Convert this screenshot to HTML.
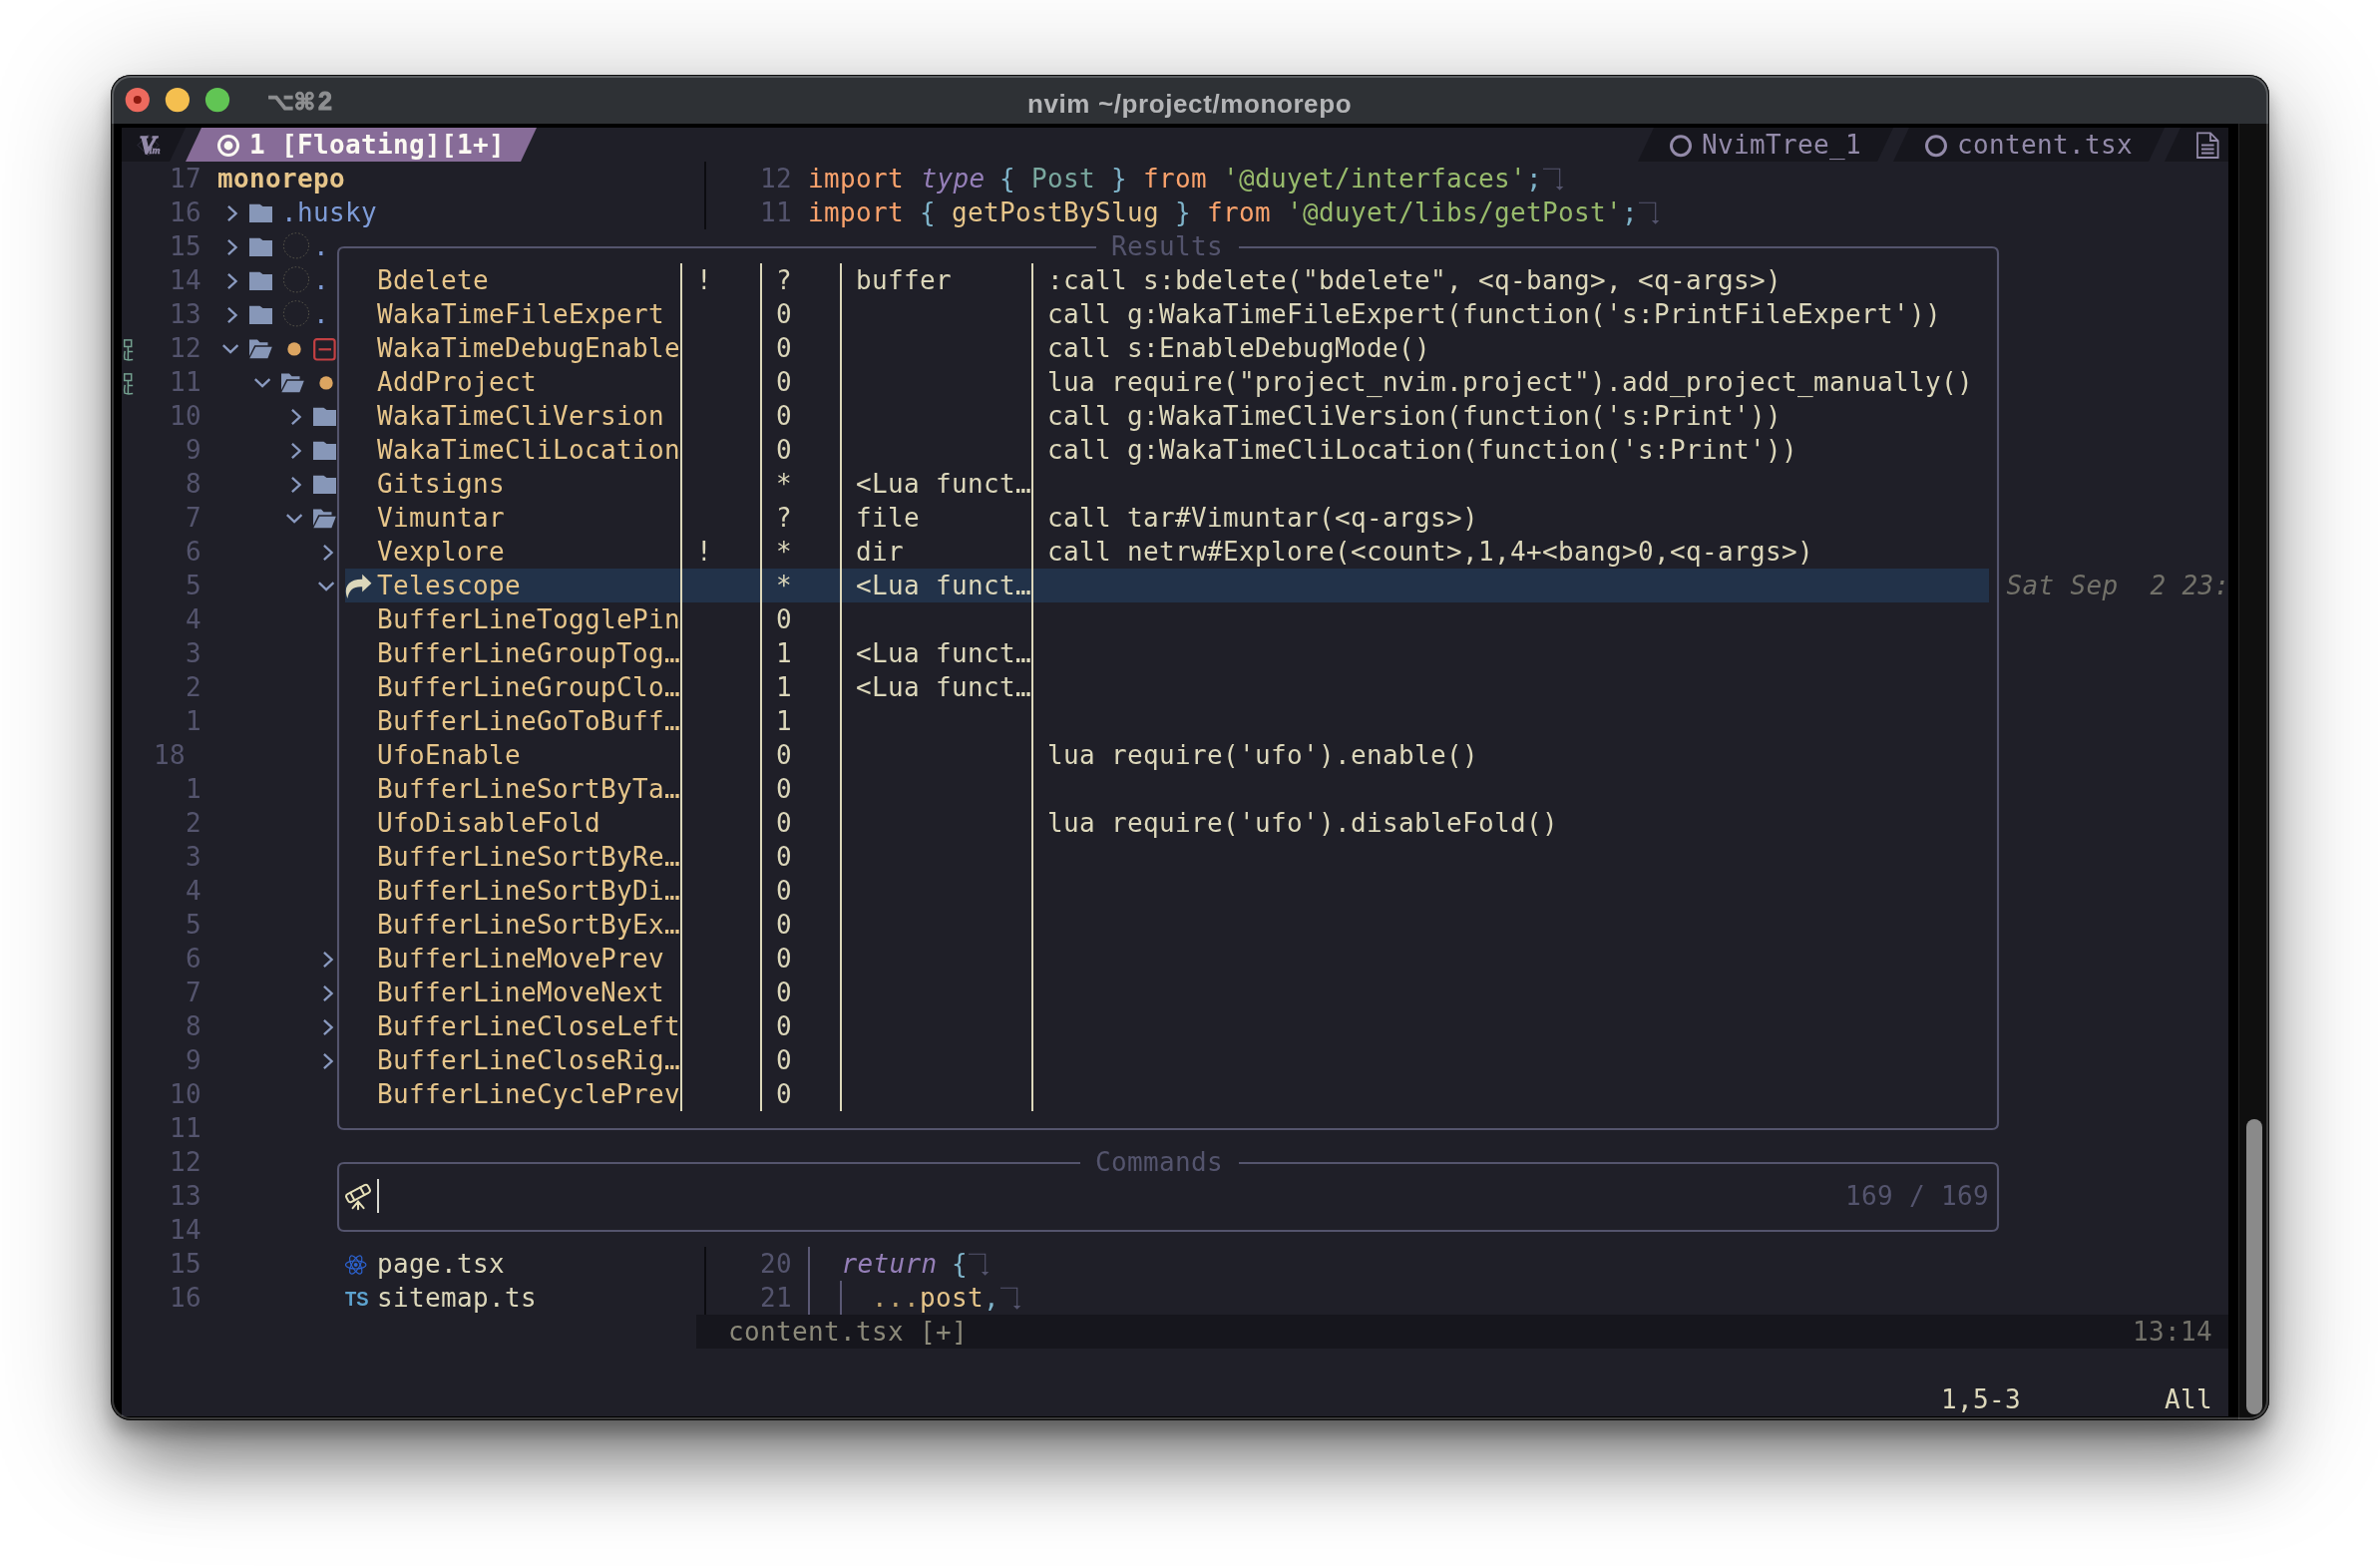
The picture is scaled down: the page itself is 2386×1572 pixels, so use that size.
<!DOCTYPE html>
<html lang="en"><head><meta charset="utf-8"><title>nvim ~/project/monorepo</title>
<style>
html,body{margin:0;padding:0;background:#fff;}
body{width:2386px;height:1572px;position:relative;overflow:hidden;}
.win{position:absolute;left:111px;top:75px;width:2163.5px;height:1348.5px;border-radius:20px;background:#000;overflow:hidden;will-change:transform;}
.shadow{position:absolute;left:111px;top:75px;width:2163.5px;height:1348.5px;border-radius:20px;
 box-shadow:0 12px 18px rgba(0,0,0,.28),0 20px 120px rgba(0,0,0,.28),0 50px 70px -12px rgba(0,0,0,.42);}
.r{position:absolute;display:block;}
.t{position:absolute;height:34px;line-height:34px;white-space:pre;font-family:"DejaVu Sans Mono","Liberation Mono",monospace;font-size:26px;letter-spacing:0.3467px;}
.b{font-weight:bold;}
.i{font-style:italic;margin-left:1.5px;}
.ui{position:absolute;white-space:pre;font-family:"Liberation Sans","DejaVu Sans",sans-serif;font-weight:bold;}
</style></head><body>
<div class="shadow"></div>
<div class="win">
<div class="r" style="left:0px;top:0px;width:2164px;height:49px;background:#2e3135;"></div>
<svg class="r" style="left:13px;top:11px" width="110" height="28" viewBox="0 0 110 28"><circle cx="13.8" cy="14.1" r="12.1" fill="#ed6a5e"/><circle cx="13.8" cy="14.1" r="4" fill="#8c1a10"/><circle cx="53.9" cy="14.1" r="12.1" fill="#f5bf4f"/><circle cx="94" cy="14.1" r="12.1" fill="#61c554"/></svg>
<span class="ui" style="left:157px;top:11px;line-height:30px;color:#8e8f91;"><span style="font-family:'DejaVu Sans',sans-serif;font-size:23.5px;-webkit-text-stroke:0.9px #8e8f91;letter-spacing:-0.5px">⌥⌘</span><span style="font-size:25px;margin-left:3px;-webkit-text-stroke:1px #8e8f91">2</span></span>
<span class="ui" id="title" style="left:919px;top:13.5px;font-size:26px;letter-spacing:0.6px;line-height:30px;color:#b4b5b7;">nvim ~/project/monorepo</span>
<div class="r" style="left:11px;top:53px;width:2112px;height:1292px;background:#1f1f28;"></div>
<div class="r" style="left:2133px;top:49px;width:31px;height:1300px;background:#0f0f0f;"></div>
<div class="r" style="left:2133px;top:49px;width:1px;height:1300px;background:#252525;"></div>
<div class="r" style="left:2141px;top:1047px;width:16px;height:296px;background:#8a8a8a;border-radius:8px;"></div>
<svg class="r" style="left:11px;top:53px" width="80" height="34" viewBox="0 0 80 34"><path d="M0,0 H64 L48,34 H0 Z" fill="#16161d"/></svg>
<svg class="r" style="left:25px;top:59px" width="26" height="24" viewBox="0 0 26 24"><path d="M12.5,1 L23,11.5 L12.5,22 L2,11.5 Z" fill="none" stroke="#3b384a" stroke-width="0.8"/></svg>
<span class="ui" style="left:28.5px;top:55.69999999999999px;font-size:25.5px;line-height:30px;color:#938aa9;font-style:italic;font-family:'Liberation Serif',serif;-webkit-text-stroke:1.3px #938aa9;">V</span>
<span class="ui" style="left:38.5px;top:69.5px;font-size:10.5px;line-height:12px;color:#938aa9;font-style:italic;font-family:'Liberation Serif',serif;-webkit-text-stroke:0.4px #938aa9;">im</span>
<svg class="r" style="left:75px;top:53px" width="352" height="34" viewBox="0 0 352 34"><path d="M16,0 H352 L336,34 H0 Z" fill="#876c98"/></svg>
<svg class="r" style="left:106px;top:59px" width="24" height="24" viewBox="0 0 24 24"><circle cx="12" cy="12" r="9.5" fill="none" stroke="#fbf9f2" stroke-width="3"/><circle cx="12" cy="12" r="4.4" fill="#fbf9f2"/></svg>
<span class="t b" style="left:139px;top:53px;color:#fbf9f2;">1 [Floating][1+]</span>
<svg class="r" style="left:1531px;top:53px" width="256" height="34" viewBox="0 0 256 34"><path d="M16,0 H256 L240,34 H0 Z" fill="#16161d"/></svg>
<svg class="r" style="left:1562px;top:59px" width="24" height="24" viewBox="0 0 24 24"><circle cx="12" cy="12.2" r="9.5" fill="none" stroke="#938aa9" stroke-width="3"/></svg>
<span class="t" style="left:1595px;top:53px;color:#938aa9;">NvimTree_1</span>
<svg class="r" style="left:1787px;top:53px" width="272" height="34" viewBox="0 0 272 34"><path d="M16,0 H272 L256,34 H0 Z" fill="#16161d"/></svg>
<svg class="r" style="left:1818px;top:59px" width="24" height="24" viewBox="0 0 24 24"><circle cx="12" cy="12.2" r="9.5" fill="none" stroke="#938aa9" stroke-width="3"/></svg>
<span class="t" style="left:1851px;top:53px;color:#938aa9;">content.tsx</span>
<svg class="r" style="left:2059px;top:53px" width="64" height="34" viewBox="0 0 64 34"><path d="M16,0 H64 V34 H0 Z" fill="#16161d"/></svg>
<svg class="r" style="left:2089px;top:55px" width="28" height="32" viewBox="0 0 28 32"><g fill="none" stroke="#938aa9" stroke-width="1.8"><path d="M3,3.4 H16 L23.6,11 V28 H3 Z"/><path d="M16,3.4 V11 H23.6"/><path d="M7,15.5 H19.6 M7,19.5 H19.6 M7,23.5 H19.6"/></g></svg>
<span class="t" style="left:59px;top:87px;color:#54546d;">17</span>
<span class="t" style="left:59px;top:121px;color:#54546d;">16</span>
<span class="t" style="left:59px;top:155px;color:#54546d;">15</span>
<span class="t" style="left:59px;top:189px;color:#54546d;">14</span>
<span class="t" style="left:59px;top:223px;color:#54546d;">13</span>
<span class="t" style="left:59px;top:257px;color:#54546d;">12</span>
<span class="t" style="left:59px;top:291px;color:#54546d;">11</span>
<span class="t" style="left:59px;top:325px;color:#54546d;">10</span>
<span class="t" style="left:75px;top:359px;color:#54546d;">9</span>
<span class="t" style="left:75px;top:393px;color:#54546d;">8</span>
<span class="t" style="left:75px;top:427px;color:#54546d;">7</span>
<span class="t" style="left:75px;top:461px;color:#54546d;">6</span>
<span class="t" style="left:75px;top:495px;color:#54546d;">5</span>
<span class="t" style="left:75px;top:529px;color:#54546d;">4</span>
<span class="t" style="left:75px;top:563px;color:#54546d;">3</span>
<span class="t" style="left:75px;top:597px;color:#54546d;">2</span>
<span class="t" style="left:75px;top:631px;color:#54546d;">1</span>
<span class="t" style="left:43px;top:665px;color:#54546d;">18</span>
<span class="t" style="left:75px;top:699px;color:#54546d;">1</span>
<span class="t" style="left:75px;top:733px;color:#54546d;">2</span>
<span class="t" style="left:75px;top:767px;color:#54546d;">3</span>
<span class="t" style="left:75px;top:801px;color:#54546d;">4</span>
<span class="t" style="left:75px;top:835px;color:#54546d;">5</span>
<span class="t" style="left:75px;top:869px;color:#54546d;">6</span>
<span class="t" style="left:75px;top:903px;color:#54546d;">7</span>
<span class="t" style="left:75px;top:937px;color:#54546d;">8</span>
<span class="t" style="left:75px;top:971px;color:#54546d;">9</span>
<span class="t" style="left:59px;top:1005px;color:#54546d;">10</span>
<span class="t" style="left:59px;top:1039px;color:#54546d;">11</span>
<span class="t" style="left:59px;top:1073px;color:#54546d;">12</span>
<span class="t" style="left:59px;top:1107px;color:#54546d;">13</span>
<span class="t" style="left:59px;top:1141px;color:#54546d;">14</span>
<span class="t" style="left:59px;top:1175px;color:#54546d;">15</span>
<span class="t" style="left:59px;top:1209px;color:#54546d;">16</span>
<span class="t b" style="left:107px;top:87px;color:#e6c58a;">monorepo</span>
<svg class="r" style="left:110.5px;top:129px" width="20" height="20" viewBox="0 0 20 20"><polyline points="6.9,2.9 14.6,10 6.9,17.1" fill="none" stroke="#8a9ac0" stroke-width="2.3"/></svg>
<svg class="r" style="left:139px;top:129px" width="24" height="20" viewBox="0 0 24 20"><path d="M0,0.7 H10.5 L13.5,3 H23 V19 H0 Z" fill="#8797b8"/></svg>
<span class="t" style="left:171px;top:121px;color:#7e9cd8;">.husky</span>
<svg class="r" style="left:110.5px;top:163px" width="20" height="20" viewBox="0 0 20 20"><polyline points="6.9,2.9 14.6,10 6.9,17.1" fill="none" stroke="#8a9ac0" stroke-width="2.3"/></svg>
<svg class="r" style="left:139px;top:163px" width="24" height="20" viewBox="0 0 24 20"><path d="M0,0.7 H10.5 L13.5,3 H23 V19 H0 Z" fill="#8797b8"/></svg>
<svg class="r" style="left:171px;top:157px" width="30" height="30" viewBox="0 0 30 30"><circle cx="15" cy="14.3" r="12.6" fill="none" stroke="#5a584c" stroke-width="1" stroke-dasharray="1.6 2"/></svg>
<span class="t" style="left:203px;top:155px;color:#7e9cd8;">.</span>
<svg class="r" style="left:110.5px;top:197px" width="20" height="20" viewBox="0 0 20 20"><polyline points="6.9,2.9 14.6,10 6.9,17.1" fill="none" stroke="#8a9ac0" stroke-width="2.3"/></svg>
<svg class="r" style="left:139px;top:197px" width="24" height="20" viewBox="0 0 24 20"><path d="M0,0.7 H10.5 L13.5,3 H23 V19 H0 Z" fill="#8797b8"/></svg>
<svg class="r" style="left:171px;top:191px" width="30" height="30" viewBox="0 0 30 30"><circle cx="15" cy="14.3" r="12.6" fill="none" stroke="#5a584c" stroke-width="1" stroke-dasharray="1.6 2"/></svg>
<span class="t" style="left:203px;top:189px;color:#7e9cd8;">.</span>
<svg class="r" style="left:110.5px;top:231px" width="20" height="20" viewBox="0 0 20 20"><polyline points="6.9,2.9 14.6,10 6.9,17.1" fill="none" stroke="#8a9ac0" stroke-width="2.3"/></svg>
<svg class="r" style="left:139px;top:231px" width="24" height="20" viewBox="0 0 24 20"><path d="M0,0.7 H10.5 L13.5,3 H23 V19 H0 Z" fill="#8797b8"/></svg>
<svg class="r" style="left:171px;top:225px" width="30" height="30" viewBox="0 0 30 30"><circle cx="15" cy="14.3" r="12.6" fill="none" stroke="#5a584c" stroke-width="1" stroke-dasharray="1.6 2"/></svg>
<span class="t" style="left:203px;top:223px;color:#7e9cd8;">.</span>
<svg class="r" style="left:11px;top:263.5px" width="14" height="26" viewBox="0 0 14 26"><g fill="none" stroke="#73a08f" stroke-width="1.5"><rect x="2.7" y="1.9" width="7" height="6.6"/><path d="M6.4,8.5 V21.8 M6.4,13.6 H11.2 M3.2,12.8 C2.6,16 2.4,19 3,21.2 C5,22.3 8,22 11.2,21.6"/></g></svg>
<svg class="r" style="left:109.80000000000001px;top:267px" width="22" height="16" viewBox="0 0 22 16"><polyline points="2.8,4.2 10.1,11.1 17.4,4.2" fill="none" stroke="#8a9ac0" stroke-width="2.3"/></svg>
<svg class="r" style="left:139px;top:265px" width="24" height="22" viewBox="0 0 24 22"><path d="M0,0.6 H8 L10.5,3.2 H18.5 V6.3 H5.2 L0,17 Z" fill="#8797b8"/><path d="M6.2,7.8 H22.8 L18.4,19.2 H0.3 Z" fill="#8797b8"/></svg>
<svg class="r" style="left:177px;top:268px" width="14" height="14" viewBox="0 0 14 14"><circle cx="7" cy="6.9" r="6.7" fill="#dca561"/></svg>
<svg class="r" style="left:203px;top:263px" width="24" height="24" viewBox="0 0 24 24"><rect x="1.2" y="2.1" width="20.4" height="20.4" rx="2.5" fill="none" stroke="#c34043" stroke-width="2.2"/><path d="M5.5,12.3 H18" stroke="#c34043" stroke-width="2.2"/></svg>
<svg class="r" style="left:11px;top:297.5px" width="14" height="26" viewBox="0 0 14 26"><g fill="none" stroke="#73a08f" stroke-width="1.5"><rect x="2.7" y="1.9" width="7" height="6.6"/><path d="M6.4,8.5 V21.8 M6.4,13.6 H11.2 M3.2,12.8 C2.6,16 2.4,19 3,21.2 C5,22.3 8,22 11.2,21.6"/></g></svg>
<svg class="r" style="left:141.8px;top:301px" width="22" height="16" viewBox="0 0 22 16"><polyline points="2.8,4.2 10.1,11.1 17.4,4.2" fill="none" stroke="#8a9ac0" stroke-width="2.3"/></svg>
<svg class="r" style="left:171px;top:299px" width="24" height="22" viewBox="0 0 24 22"><path d="M0,0.6 H8 L10.5,3.2 H18.5 V6.3 H5.2 L0,17 Z" fill="#8797b8"/><path d="M6.2,7.8 H22.8 L18.4,19.2 H0.3 Z" fill="#8797b8"/></svg>
<svg class="r" style="left:209px;top:302px" width="14" height="14" viewBox="0 0 14 14"><circle cx="7" cy="6.9" r="6.7" fill="#dca561"/></svg>
<svg class="r" style="left:174.5px;top:333px" width="20" height="20" viewBox="0 0 20 20"><polyline points="6.9,2.9 14.6,10 6.9,17.1" fill="none" stroke="#8a9ac0" stroke-width="2.3"/></svg>
<svg class="r" style="left:203px;top:333px" width="24" height="20" viewBox="0 0 24 20"><path d="M0,0.7 H10.5 L13.5,3 H23 V19 H0 Z" fill="#8797b8"/></svg>
<svg class="r" style="left:174.5px;top:367px" width="20" height="20" viewBox="0 0 20 20"><polyline points="6.9,2.9 14.6,10 6.9,17.1" fill="none" stroke="#8a9ac0" stroke-width="2.3"/></svg>
<svg class="r" style="left:203px;top:367px" width="24" height="20" viewBox="0 0 24 20"><path d="M0,0.7 H10.5 L13.5,3 H23 V19 H0 Z" fill="#8797b8"/></svg>
<svg class="r" style="left:174.5px;top:401px" width="20" height="20" viewBox="0 0 20 20"><polyline points="6.9,2.9 14.6,10 6.9,17.1" fill="none" stroke="#8a9ac0" stroke-width="2.3"/></svg>
<svg class="r" style="left:203px;top:401px" width="24" height="20" viewBox="0 0 24 20"><path d="M0,0.7 H10.5 L13.5,3 H23 V19 H0 Z" fill="#8797b8"/></svg>
<svg class="r" style="left:173.8px;top:437px" width="22" height="16" viewBox="0 0 22 16"><polyline points="2.8,4.2 10.1,11.1 17.4,4.2" fill="none" stroke="#8a9ac0" stroke-width="2.3"/></svg>
<svg class="r" style="left:203px;top:435px" width="24" height="22" viewBox="0 0 24 22"><path d="M0,0.6 H8 L10.5,3.2 H18.5 V6.3 H5.2 L0,17 Z" fill="#8797b8"/><path d="M6.2,7.8 H22.8 L18.4,19.2 H0.3 Z" fill="#8797b8"/></svg>
<svg class="r" style="left:206.5px;top:469px" width="20" height="20" viewBox="0 0 20 20"><polyline points="6.9,2.9 14.6,10 6.9,17.1" fill="none" stroke="#8a9ac0" stroke-width="2.3"/></svg>
<svg class="r" style="left:205.8px;top:505px" width="22" height="16" viewBox="0 0 22 16"><polyline points="2.8,4.2 10.1,11.1 17.4,4.2" fill="none" stroke="#8a9ac0" stroke-width="2.3"/></svg>
<svg class="r" style="left:206.5px;top:877px" width="20" height="20" viewBox="0 0 20 20"><polyline points="6.9,2.9 14.6,10 6.9,17.1" fill="none" stroke="#8a9ac0" stroke-width="2.3"/></svg>
<svg class="r" style="left:206.5px;top:911px" width="20" height="20" viewBox="0 0 20 20"><polyline points="6.9,2.9 14.6,10 6.9,17.1" fill="none" stroke="#8a9ac0" stroke-width="2.3"/></svg>
<svg class="r" style="left:206.5px;top:945px" width="20" height="20" viewBox="0 0 20 20"><polyline points="6.9,2.9 14.6,10 6.9,17.1" fill="none" stroke="#8a9ac0" stroke-width="2.3"/></svg>
<svg class="r" style="left:206.5px;top:979px" width="20" height="20" viewBox="0 0 20 20"><polyline points="6.9,2.9 14.6,10 6.9,17.1" fill="none" stroke="#8a9ac0" stroke-width="2.3"/></svg>
<svg class="r" style="left:235px;top:1181px" width="24" height="24" viewBox="0 0 24 24"><g fill="none" stroke="#2c62d0" stroke-width="1.2"><ellipse cx="10.7" cy="12" rx="10.2" ry="4"/><ellipse cx="10.7" cy="12" rx="10.2" ry="4" transform="rotate(60 10.7 12)"/><ellipse cx="10.7" cy="12" rx="10.2" ry="4" transform="rotate(120 10.7 12)"/></g><circle cx="10.7" cy="12" r="2" fill="#2c62d0"/></svg>
<span class="t" style="left:267px;top:1175px;color:#dcd7ba;">page.tsx</span>
<span class="ui" style="left:234.5px;top:1215px;font-size:20.5px;line-height:24px;color:#5da3cf;transform:scaleX(0.9);transform-origin:0 0;">TS</span>
<span class="t" style="left:267px;top:1209px;color:#dcd7ba;">sitemap.ts</span>
<div class="r" style="left:595px;top:87px;width:2px;height:68px;background:#0c0c10;"></div>
<div class="r" style="left:595px;top:1175px;width:2px;height:68px;background:#0c0c10;"></div>
<span class="t" style="left:651px;top:87px;color:#54546d;">12</span>
<span class="t" style="left:651px;top:121px;color:#54546d;">11</span>
<span class="t" style="left:651px;top:1175px;color:#54546d;">20</span>
<span class="t" style="left:651px;top:1209px;color:#54546d;">21</span>
<span class="t" style="left:699px;top:87px;color:#f9a26c;">import</span>
<span class="t i" style="left:811px;top:87px;color:#957fb8;">type</span>
<span class="t" style="left:891px;top:87px;color:#7fb4ca;">{</span>
<span class="t" style="left:923px;top:87px;color:#7aa89f;">Post</span>
<span class="t" style="left:1003px;top:87px;color:#7fb4ca;">}</span>
<span class="t" style="left:1035px;top:87px;color:#f9a26c;">from</span>
<span class="t" style="left:1115px;top:87px;color:#98bb6c;">'@duyet/interfaces'</span>
<span class="t" style="left:1419px;top:87px;color:#7fb4ca;">;</span>
<svg class="r" style="left:1435px;top:92px" width="24" height="30" viewBox="0 0 24 30"><path d="M1,2.2 H17.7 V20.3" fill="none" stroke="#54546d" stroke-width="1.1"/><path d="M13.9,20 H21.3 L17.6,23.8 Z" fill="#54546d"/></svg>
<span class="t" style="left:699px;top:121px;color:#f9a26c;">import</span>
<span class="t" style="left:811px;top:121px;color:#7fb4ca;">{</span>
<span class="t" style="left:843px;top:121px;color:#e6c58a;">getPostBySlug</span>
<span class="t" style="left:1067px;top:121px;color:#7fb4ca;">}</span>
<span class="t" style="left:1099px;top:121px;color:#f9a26c;">from</span>
<span class="t" style="left:1179px;top:121px;color:#98bb6c;">'@duyet/libs/getPost'</span>
<span class="t" style="left:1515px;top:121px;color:#7fb4ca;">;</span>
<svg class="r" style="left:1531px;top:126px" width="24" height="30" viewBox="0 0 24 30"><path d="M1,2.2 H17.7 V20.3" fill="none" stroke="#54546d" stroke-width="1.1"/><path d="M13.9,20 H21.3 L17.6,23.8 Z" fill="#54546d"/></svg>
<div class="r" style="left:699px;top:1175px;width:2px;height:68px;background:#5a5874;"></div>
<div class="r" style="left:731px;top:1209px;width:2px;height:34px;background:#5a5874;"></div>
<span class="t i" style="left:731px;top:1175px;color:#957fb8;">return</span>
<span class="t" style="left:843px;top:1175px;color:#7fb4ca;">{</span>
<svg class="r" style="left:859px;top:1180px" width="24" height="30" viewBox="0 0 24 30"><path d="M1,2.2 H17.7 V20.3" fill="none" stroke="#54546d" stroke-width="1.1"/><path d="M13.9,20 H21.3 L17.6,23.8 Z" fill="#54546d"/></svg>
<span class="t" style="left:763px;top:1209px;color:#c0a36e;">...</span>
<span class="t" style="left:811px;top:1209px;color:#e6c58a;">post</span>
<span class="t" style="left:875px;top:1209px;color:#7fb4ca;">,</span>
<svg class="r" style="left:891px;top:1214px" width="24" height="30" viewBox="0 0 24 30"><path d="M1,2.2 H17.7 V20.3" fill="none" stroke="#54546d" stroke-width="1.1"/><path d="M13.9,20 H21.3 L17.6,23.8 Z" fill="#54546d"/></svg>
<span class="t i" style="left:1899px;top:495px;color:#727169;">Sat Sep  2 23:</span>
<div class="r" style="left:587px;top:1243px;width:1536px;height:34px;background:#16161d;"></div>
<span class="t" style="left:619px;top:1243px;color:#8b8979;">content.tsx [+]</span>
<span class="t" style="left:2027px;top:1243px;color:#727169;">13:14</span>
<span class="t" style="left:1835px;top:1311px;color:#dcd7ba;">1,5-3</span>
<span class="t" style="left:2059px;top:1311px;color:#dcd7ba;">All</span>
<div class="r" style="left:227px;top:172px;width:1666px;height:987px;background:#1f1f28;"></div>
<svg class="r" style="left:226px;top:171px" width="1668" height="888" viewBox="0 0 1668 888"><path d="M762,2 H8 Q2,2 2,8 V880 Q2,886 8,886 H1660 Q1666,886 1666,880 V8 Q1666,2 1660,2 H905" fill="none" stroke="#54546d" stroke-width="2.1"/></svg>
<span class="t" style="left:1003px;top:155px;color:#54546d;">Results</span>
<svg class="r" style="left:226px;top:1089px" width="1668" height="72" viewBox="0 0 1668 72"><path d="M746,2 H8 Q2,2 2,8 V64 Q2,70 8,70 H1660 Q1666,70 1666,64 V8 Q1666,2 1660,2 H905" fill="none" stroke="#54546d" stroke-width="2.1"/></svg>
<span class="t" style="left:987px;top:1073px;color:#54546d;">Commands</span>
<div class="r" style="left:235px;top:495px;width:1648px;height:34px;background:#223249;"></div>
<span class="t" style="left:267px;top:189px;color:#e6c58a;">Bdelete</span>
<span class="t" style="left:587px;top:189px;color:#dcd7ba;">!</span>
<span class="t" style="left:667px;top:189px;color:#dcd7ba;">?</span>
<span class="t" style="left:747px;top:189px;color:#dcd7ba;">buffer</span>
<span class="t" style="left:939px;top:189px;color:#dcd7ba;">:call s:bdelete("bdelete", &lt;q-bang&gt;, &lt;q-args&gt;)</span>
<span class="t" style="left:267px;top:223px;color:#e6c58a;">WakaTimeFileExpert</span>
<span class="t" style="left:667px;top:223px;color:#dcd7ba;">0</span>
<span class="t" style="left:939px;top:223px;color:#dcd7ba;">call g:WakaTimeFileExpert(function('s:PrintFileExpert'))</span>
<span class="t" style="left:267px;top:257px;color:#e6c58a;">WakaTimeDebugEnable</span>
<span class="t" style="left:667px;top:257px;color:#dcd7ba;">0</span>
<span class="t" style="left:939px;top:257px;color:#dcd7ba;">call s:EnableDebugMode()</span>
<span class="t" style="left:267px;top:291px;color:#e6c58a;">AddProject</span>
<span class="t" style="left:667px;top:291px;color:#dcd7ba;">0</span>
<span class="t" style="left:939px;top:291px;color:#dcd7ba;">lua require("project_nvim.project").add_project_manually()</span>
<span class="t" style="left:267px;top:325px;color:#e6c58a;">WakaTimeCliVersion</span>
<span class="t" style="left:667px;top:325px;color:#dcd7ba;">0</span>
<span class="t" style="left:939px;top:325px;color:#dcd7ba;">call g:WakaTimeCliVersion(function('s:Print'))</span>
<span class="t" style="left:267px;top:359px;color:#e6c58a;">WakaTimeCliLocation</span>
<span class="t" style="left:667px;top:359px;color:#dcd7ba;">0</span>
<span class="t" style="left:939px;top:359px;color:#dcd7ba;">call g:WakaTimeCliLocation(function('s:Print'))</span>
<span class="t" style="left:267px;top:393px;color:#e6c58a;">Gitsigns</span>
<span class="t" style="left:667px;top:393px;color:#dcd7ba;">*</span>
<span class="t" style="left:747px;top:393px;color:#dcd7ba;">&lt;Lua funct…</span>
<span class="t" style="left:267px;top:427px;color:#e6c58a;">Vimuntar</span>
<span class="t" style="left:667px;top:427px;color:#dcd7ba;">?</span>
<span class="t" style="left:747px;top:427px;color:#dcd7ba;">file</span>
<span class="t" style="left:939px;top:427px;color:#dcd7ba;">call tar#Vimuntar(&lt;q-args&gt;)</span>
<span class="t" style="left:267px;top:461px;color:#e6c58a;">Vexplore</span>
<span class="t" style="left:587px;top:461px;color:#dcd7ba;">!</span>
<span class="t" style="left:667px;top:461px;color:#dcd7ba;">*</span>
<span class="t" style="left:747px;top:461px;color:#dcd7ba;">dir</span>
<span class="t" style="left:939px;top:461px;color:#dcd7ba;">call netrw#Explore(&lt;count&gt;,1,4+&lt;bang&gt;0,&lt;q-args&gt;)</span>
<span class="t" style="left:267px;top:495px;color:#e6c58a;">Telescope</span>
<span class="t" style="left:667px;top:495px;color:#dcd7ba;">*</span>
<span class="t" style="left:747px;top:495px;color:#dcd7ba;">&lt;Lua funct…</span>
<span class="t" style="left:267px;top:529px;color:#e6c58a;">BufferLineTogglePin</span>
<span class="t" style="left:667px;top:529px;color:#dcd7ba;">0</span>
<span class="t" style="left:267px;top:563px;color:#e6c58a;">BufferLineGroupTog…</span>
<span class="t" style="left:667px;top:563px;color:#dcd7ba;">1</span>
<span class="t" style="left:747px;top:563px;color:#dcd7ba;">&lt;Lua funct…</span>
<span class="t" style="left:267px;top:597px;color:#e6c58a;">BufferLineGroupClo…</span>
<span class="t" style="left:667px;top:597px;color:#dcd7ba;">1</span>
<span class="t" style="left:747px;top:597px;color:#dcd7ba;">&lt;Lua funct…</span>
<span class="t" style="left:267px;top:631px;color:#e6c58a;">BufferLineGoToBuff…</span>
<span class="t" style="left:667px;top:631px;color:#dcd7ba;">1</span>
<span class="t" style="left:267px;top:665px;color:#e6c58a;">UfoEnable</span>
<span class="t" style="left:667px;top:665px;color:#dcd7ba;">0</span>
<span class="t" style="left:939px;top:665px;color:#dcd7ba;">lua require('ufo').enable()</span>
<span class="t" style="left:267px;top:699px;color:#e6c58a;">BufferLineSortByTa…</span>
<span class="t" style="left:667px;top:699px;color:#dcd7ba;">0</span>
<span class="t" style="left:267px;top:733px;color:#e6c58a;">UfoDisableFold</span>
<span class="t" style="left:667px;top:733px;color:#dcd7ba;">0</span>
<span class="t" style="left:939px;top:733px;color:#dcd7ba;">lua require('ufo').disableFold()</span>
<span class="t" style="left:267px;top:767px;color:#e6c58a;">BufferLineSortByRe…</span>
<span class="t" style="left:667px;top:767px;color:#dcd7ba;">0</span>
<span class="t" style="left:267px;top:801px;color:#e6c58a;">BufferLineSortByDi…</span>
<span class="t" style="left:667px;top:801px;color:#dcd7ba;">0</span>
<span class="t" style="left:267px;top:835px;color:#e6c58a;">BufferLineSortByEx…</span>
<span class="t" style="left:667px;top:835px;color:#dcd7ba;">0</span>
<span class="t" style="left:267px;top:869px;color:#e6c58a;">BufferLineMovePrev</span>
<span class="t" style="left:667px;top:869px;color:#dcd7ba;">0</span>
<span class="t" style="left:267px;top:903px;color:#e6c58a;">BufferLineMoveNext</span>
<span class="t" style="left:667px;top:903px;color:#dcd7ba;">0</span>
<span class="t" style="left:267px;top:937px;color:#e6c58a;">BufferLineCloseLeft</span>
<span class="t" style="left:667px;top:937px;color:#dcd7ba;">0</span>
<span class="t" style="left:267px;top:971px;color:#e6c58a;">BufferLineCloseRig…</span>
<span class="t" style="left:667px;top:971px;color:#dcd7ba;">0</span>
<span class="t" style="left:267px;top:1005px;color:#e6c58a;">BufferLineCyclePrev</span>
<span class="t" style="left:667px;top:1005px;color:#dcd7ba;">0</span>
<div class="r" style="left:571px;top:189px;width:2px;height:850px;background:#dcd7ba;"></div>
<div class="r" style="left:651px;top:189px;width:2px;height:850px;background:#dcd7ba;"></div>
<div class="r" style="left:731px;top:189px;width:2px;height:850px;background:#dcd7ba;"></div>
<div class="r" style="left:923px;top:189px;width:2px;height:850px;background:#dcd7ba;"></div>
<svg class="r" style="left:234px;top:499px" width="30" height="28" viewBox="0 0 30 28"><path d="M18.2,1.8 L27.4,10.7 L18.2,19.4 V14.2 C10,13.6 4.8,17 3.4,26 C-1.5,14 5,6.6 18.2,6.8 Z" fill="#dcd7ba"/></svg>
<svg class="r" style="left:233px;top:1109px" width="30" height="32" viewBox="0 0 30 32"><g fill="none" stroke="#e6e0b8" stroke-width="2" stroke-linejoin="round" stroke-linecap="round"><g transform="rotate(-28 15 12.5)"><rect x="2.8" y="8.2" width="24.4" height="8.6" rx="2.6"/><path d="M8.6,8.2 V16.8 M19.8,8.2 V16.8"/></g><path d="M15,20.6 L9.6,27.2 M15,20.6 V28.2 M15,20.6 L20.6,27.2"/></g></svg>
<div class="r" style="left:267px;top:1107px;width:2.4px;height:34px;background:#d8d8d0;"></div>
<span class="t" style="left:1739px;top:1107px;color:#54546d;">169 / 169</span>
<div class="r" style="left:0;top:0;width:2163.5px;height:1348.5px;border-radius:20px;box-shadow:inset 0 0 0 1px rgba(0,0,0,.85),inset 0 0 0 3px rgba(255,255,255,.22);"></div>
</div></body></html>
